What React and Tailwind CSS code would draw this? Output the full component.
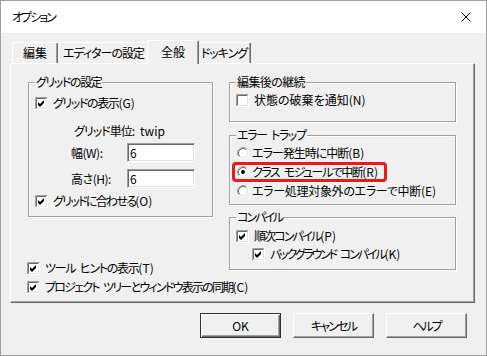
import React from 'react';

// classic sunken check box, 13x13
const CheckBox = ({ checked = true }) => (
  <svg width="13" height="13" viewBox="0 0 13 13" className="shrink-0">
    <rect x="0" y="0" width="13" height="13" fill="#fff" />
    <path d="M0.5 12.5V0.5H12.5" stroke="#a0a0a0" fill="none" />
    <path d="M1.5 11.5V1.5H11.5" stroke="#696969" fill="none" />
    <path d="M1.5 11.5H11.5V1.5" stroke="#e3e3e3" fill="none" />
    <path d="M0.5 12.5H12.5V0.5" stroke="#fff" fill="none" />
    {checked && <path d="M3 5L5 7L9 3L9 6L5 10L3 8Z" fill="#000" />}
  </svg>
);

const Radio = ({ checked = false }) => (
  <svg width="12" height="12" viewBox="0 0 12 12" className="shrink-0">
    <circle cx="6" cy="6" r="5" fill="#fff" />
    <path d="M2.11 9.89A5.5 5.5 0 0 1 9.89 2.11" stroke="#a0a0a0" fill="none" />
    <path d="M9.89 2.11A5.5 5.5 0 0 1 2.11 9.89" stroke="#fff" fill="none" />
    <path d="M2.82 9.18A4.5 4.5 0 0 1 9.18 2.82" stroke="#696969" fill="none" />
    <path d="M9.18 2.82A4.5 4.5 0 0 1 2.82 9.18" stroke="#e3e3e3" fill="none" />
    {checked && <circle cx="6" cy="6" r="2" fill="#000" />}
  </svg>
);

// Japanese text is tightened, the access key "(X)" is left alone
const Label = ({ text, hotkey, t = '' }) => (
  <span className="whitespace-nowrap">
    <span className={t}>{text}</span>
    {hotkey && <span>({hotkey})</span>}
  </span>
);

const CheckRow = ({ text, hotkey, t = '', checked = true, className = '' }) => (
  <div className={`flex h-[14px] items-center gap-[5px] whitespace-nowrap ${className}`}>
    <CheckBox checked={checked} />
    <Label text={text} hotkey={hotkey} t={t} />
  </div>
);

const RadioRow = ({ text, hotkey, t = '', className = '' }) => (
  <div className={`ml-[1px] flex h-[14px] items-center gap-[3px] whitespace-nowrap ${className}`}>
    <Radio />
    <Label text={text} hotkey={hotkey} t={t} />
  </div>
);

const Group = ({ title, t = '', className = '', children }) => (
  <div
    className={`flex flex-col border border-[#a0a0a0] pl-[6px] shadow-[inset_1px_1px_0_#fff,1px_1px_0_#fff] ${className}`}
  >
    <span className={`-mt-[8px] self-start whitespace-nowrap bg-[#f0f0f0] px-[1px] leading-[14px] ${t}`}>{title}</span>
    {children}
  </div>
);

const Field = ({ value }) => (
  <div className="flex h-[19px] w-[68px] items-center border border-t-[#a0a0a0] border-l-[#a0a0a0] border-r-white border-b-white bg-white pl-[2px] shadow-[inset_1px_1px_0_#696969,inset_-1px_-1px_0_#e3e3e3]">
    {value}
  </div>
);

const Tab = ({ label, className = '' }) => (
  <div
    className={`flex h-[21px] items-center justify-center whitespace-nowrap rounded-t-[2px] border-l border-t border-r border-l-white border-t-white border-r-[#696969] shadow-[inset_-1px_0_0_#a0a0a0] ${className}`}
  >
    {label}
  </div>
);

const Button = ({ label, t = '', isDefault = false }) => (
  <button
    className={
      isDefault
        ? 'flex h-[25px] w-[81px] items-center justify-center border border-[#303030] bg-[#f0f0f0] shadow-[inset_1px_1px_0_#fff,inset_-1px_-1px_0_#696969,inset_-2px_-2px_0_#a0a0a0]'
        : 'flex h-[25px] w-[81px] items-center justify-center border border-t-white border-l-white border-r-[#696969] border-b-[#696969] bg-[#f0f0f0] shadow-[inset_-1px_-1px_0_#a0a0a0]'
    }
  >
    <span className={t}>{label}</span>
  </button>
);

const SP = '\u2002';

export default function App() {
  return (
    <div className="flex h-[356px] w-[487px] flex-col border border-[#a0a0a0] bg-[#f0f0f0] font-['Noto_Sans_CJK_JP','Noto_Sans',sans-serif] text-[12px] leading-[14px] text-black [font-feature-settings:'palt']">
      {/* title bar */}
      <div className="flex h-[32px] shrink-0 items-center justify-between bg-white pl-[11px] pr-[15px]">
        <span className="tracking-[-2px]">オプション</span>
        <svg width="10" height="10" viewBox="0 0 10 10">
          <path d="M0.5 0.5L9.5 9.5M9.5 0.5L0.5 9.5" stroke="#000" strokeWidth="1" />
        </svg>
      </div>

      <div className="flex flex-col pl-[9px] pt-[7px]">
        {/* tabs */}
        <div className="flex h-[23px] items-end pl-[2px]">
          <Tab label="編集" className="w-[46px]" />
          <Tab label="エディターの設定" className="w-[91px] tracking-[-1px]" />
          <div className="relative z-10 -mb-[1px] -ml-[2px] -mr-[2px] flex h-[24px] w-[52px] items-start justify-center rounded-t-[2px] border-l border-t border-r border-l-white border-t-white border-r-[#696969] bg-[#f0f0f0] pt-[4px] shadow-[inset_-1px_0_0_#a0a0a0]">
            全般
          </div>
          <Tab label="ドッキング" className="w-[54px] tracking-[-1px]" />
        </div>

        {/* page */}
        <div className="flex h-[240px] w-[465px] flex-col border border-t-white border-l-white border-r-[#696969] border-b-[#696969] pl-[17px] pt-[18px] shadow-[inset_-1px_-1px_0_#a0a0a0]">
          <div className="flex gap-[16px]">
            {/* left column */}
            <div className="flex w-[185px] flex-col">
              <Group title="グリッドの設定" t="tracking-[-1.4px]" className="pb-[8px]">
                <CheckRow text="グリッドの表示" hotkey="G" t="tracking-[-1.4px]" className="mt-[7px]" />
                <div className="mt-[14px] flex h-[14px] whitespace-nowrap pl-[39px]">
                  <span className="w-[66px] tracking-[-1px]">グリッド単位:</span>
                  <span>twip</span>
                </div>
                <div className="mt-[5px] flex items-center">
                  <span className="w-[92px] pl-[36px] tracking-[-0.5px]">幅(W):</span>
                  <Field value="6" />
                </div>
                <div className="mt-[7px] flex items-center">
                  <span className="w-[92px] pl-[36px] tracking-[-0.5px]">高さ(H):</span>
                  <Field value="6" />
                </div>
                <CheckRow text="グリッドに合わせる" hotkey="O" t="tracking-[-1.7px]" className="mt-[6px]" />
              </Group>
              <CheckRow
                text={`ツール${SP}ヒントの表示`}
                hotkey="T"
                t="tracking-[-1.3px]"
                className="-ml-[1px] mt-[44px]"
              />
              <CheckRow
                text={`プロジェクト${SP}ツリーとウィンドウ表示の同期`}
                hotkey="C"
                t="tracking-[-1.75px]"
                className="-ml-[1px] mt-[5px]"
              />
            </div>

            {/* right column */}
            <div className="flex w-[227px] flex-col">
              <Group title="編集後の継続" t="tracking-[-0.6px]" className="pb-[14px]">
                <CheckRow text="状態の破棄を通知" hotkey="N" checked={false} className="mt-[4px]" />
              </Group>
              <Group title={`エラー${SP}トラップ`} t="tracking-[-1.4px]" className="mt-[13px] pb-[6px]">
                <RadioRow text="エラー発生時に中断" hotkey="B" t="tracking-[-1px]" className="mt-[4px]" />
                <div className="-my-[3px] -ml-[4px] mt-[2px] flex h-[20px] w-[155px] items-center gap-[3px] whitespace-nowrap rounded-[4px] border-[3px] border-[#ea1a1a] pl-[2px]">
                  <Radio checked />
                  <Label text={`クラス${SP}モジュールで中断`} hotkey="R" t="tracking-[-1.5px]" />
                </div>
                <RadioRow
                  text="エラー処理対象外のエラーで中断"
                  hotkey="E"
                  t="tracking-[-0.3px]"
                  className="mt-[5px]"
                />
              </Group>
              <Group title="コンパイル" t="tracking-[-2px]" className="mt-[12px] pb-[8px]">
                <CheckRow text="順次コンパイル" hotkey="P" t="tracking-[-1.85px]" className="mt-[5px]" />
                <CheckRow
                  text={`バックグラウンド${SP}コンパイル`}
                  hotkey="K"
                  t="tracking-[-2.15px]"
                  className="ml-[16px] mt-[4px]"
                />
              </Group>
            </div>
          </div>
        </div>

        {/* buttons */}
        <div className="mt-[10px] flex w-[465px] justify-end gap-[12px] pr-[8px]">
          <Button label="OK" isDefault />
          <Button label="キャンセル" t="tracking-[-1.8px]" />
          <Button label="ヘルプ" t="tracking-[-2px]" />
        </div>
      </div>
    </div>
  );
}
